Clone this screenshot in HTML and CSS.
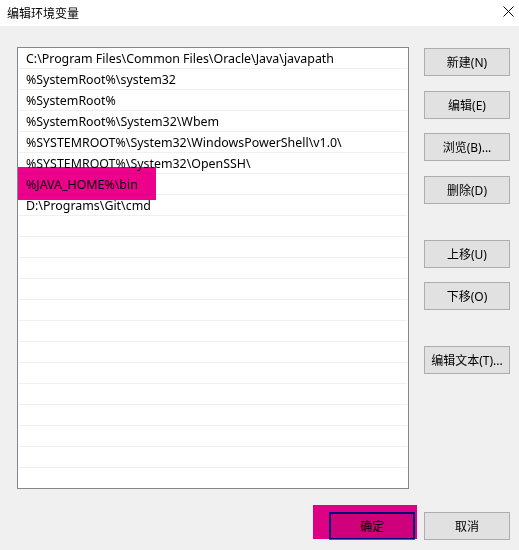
FILE: index.html
```html
<!DOCTYPE html>
<html lang="zh-CN">
<head>
<meta charset="utf-8">
<title>编辑环境变量</title>
<link rel="stylesheet" href="styles.css">
</head>
<body>
<div class="dialog">
  <div class="titlebar">
    <span class="title">编辑环境变量</span>
    <svg class="close" width="11" height="11" viewBox="0 0 11 11"><path d="M0.5 0.5 L10.5 10.5 M10.5 0.5 L0.5 10.5" stroke="#000" stroke-width="1" fill="none"/></svg>
  </div>
  <div class="content">
    <div class="main">
      <div class="list">
        <div class="row">C:\Program Files\Common Files\Oracle\Java\javapath</div>
        <div class="row">%SystemRoot%\system32</div>
        <div class="row">%SystemRoot%</div>
        <div class="row">%SystemRoot%\System32\Wbem</div>
        <div class="row">%SYSTEMROOT%\System32\WindowsPowerShell\v1.0\</div>
        <div class="row">%SYSTEMROOT%\System32\OpenSSH\</div>
        <div class="row">%JAVA_HOME%\bin</div>
        <div class="row">D:\Programs\Git\cmd</div>
        <div class="row"></div><div class="row"></div><div class="row"></div><div class="row"></div>
        <div class="row"></div><div class="row"></div><div class="row"></div><div class="row"></div>
        <div class="row"></div><div class="row"></div><div class="row"></div><div class="row"></div>
        <div class="row"></div>
        <div class="mark mark-row"></div>
      </div>
      <div class="side">
        <button class="btn g15">新建(N)</button>
        <button class="btn">编辑(E)</button>
        <button class="btn g15">浏览(B)...</button>
        <button class="btn g36">删除(D)</button>
        <button class="btn">上移(U)</button>
        <button class="btn g36">下移(O)</button>
        <button class="btn">编辑文本(T)...</button>
      </div>
    </div>
    <div class="footer">
      <div class="ok-wrap">
        <button class="btn default">确定</button>
        <div class="mark mark-ok"></div>
      </div>
      <button class="btn">取消</button>
    </div>
  </div>
</div>
</body>
</html>
```

FILE: styles.css
```css
* { box-sizing: border-box; }
html, body { margin: 0; padding: 0; }
body {
  width: 519px;
  height: 550px;
  overflow: hidden;
  font-family: "Noto Sans", "Noto Sans CJK SC", sans-serif;
  font-size: 12px;
  color: #000;
  background: #f0f0f0;
}
.dialog { width: 519px; height: 550px; display: flex; flex-direction: column; }
.titlebar {
  height: 26px;
  background: #fff;
  display: flex;
  align-items: center;
  justify-content: space-between;
  padding: 0 5px 0 7px;
}
.title { font-family: "Noto Sans CJK SC", sans-serif; font-size: 12px; line-height: 1; }
.close { display: block; margin-top: -3px; }
.content { flex: 1; padding: 21px 9px 0 17px; display: flex; flex-direction: column; }
.main { display: flex; gap: 15px; }
.list {
  position: relative;
  width: 392px;
  height: 442px;
  background: #fff;
  border: 1px solid #828790;
  padding: 0 1px;
  overflow: hidden;
}
.row {
  height: 21px;
  line-height: 19px;
  padding-top: 1px;
  border-bottom: 1px solid #f0f0f0;
  padding-left: 7px;
  white-space: nowrap;
  font-size: 12.4px;
}
.side { display: flex; flex-direction: column; padding-top: 1px; }
.btn {
  width: 86px;
  height: 28px;
  background: #e1e1e1;
  border: 1px solid #adadad;
  font-family: "Noto Sans", "Noto Sans CJK SC", sans-serif;
  font-size: 12px;
  color: #000;
  padding: 0;
  margin: 0 0 14px 0;
}
.btn.g15 { margin-bottom: 15px; }
.btn.g36 { margin-bottom: 36px; }
.footer { display: flex; justify-content: flex-end; gap: 9px; margin-top: 23px; }
.footer .btn { margin: 0; }
.ok-wrap { position: relative; }
.btn.default { border: 2px solid #0078d7; }
.mark {
  position: absolute;
  background: #ec008c;
  mix-blend-mode: multiply;
}
.mark-row { left: -2px; top: 119px; width: 140px; height: 33px; }
.mark-ok { left: -16px; top: -7px; width: 104px; height: 34px; }
```
